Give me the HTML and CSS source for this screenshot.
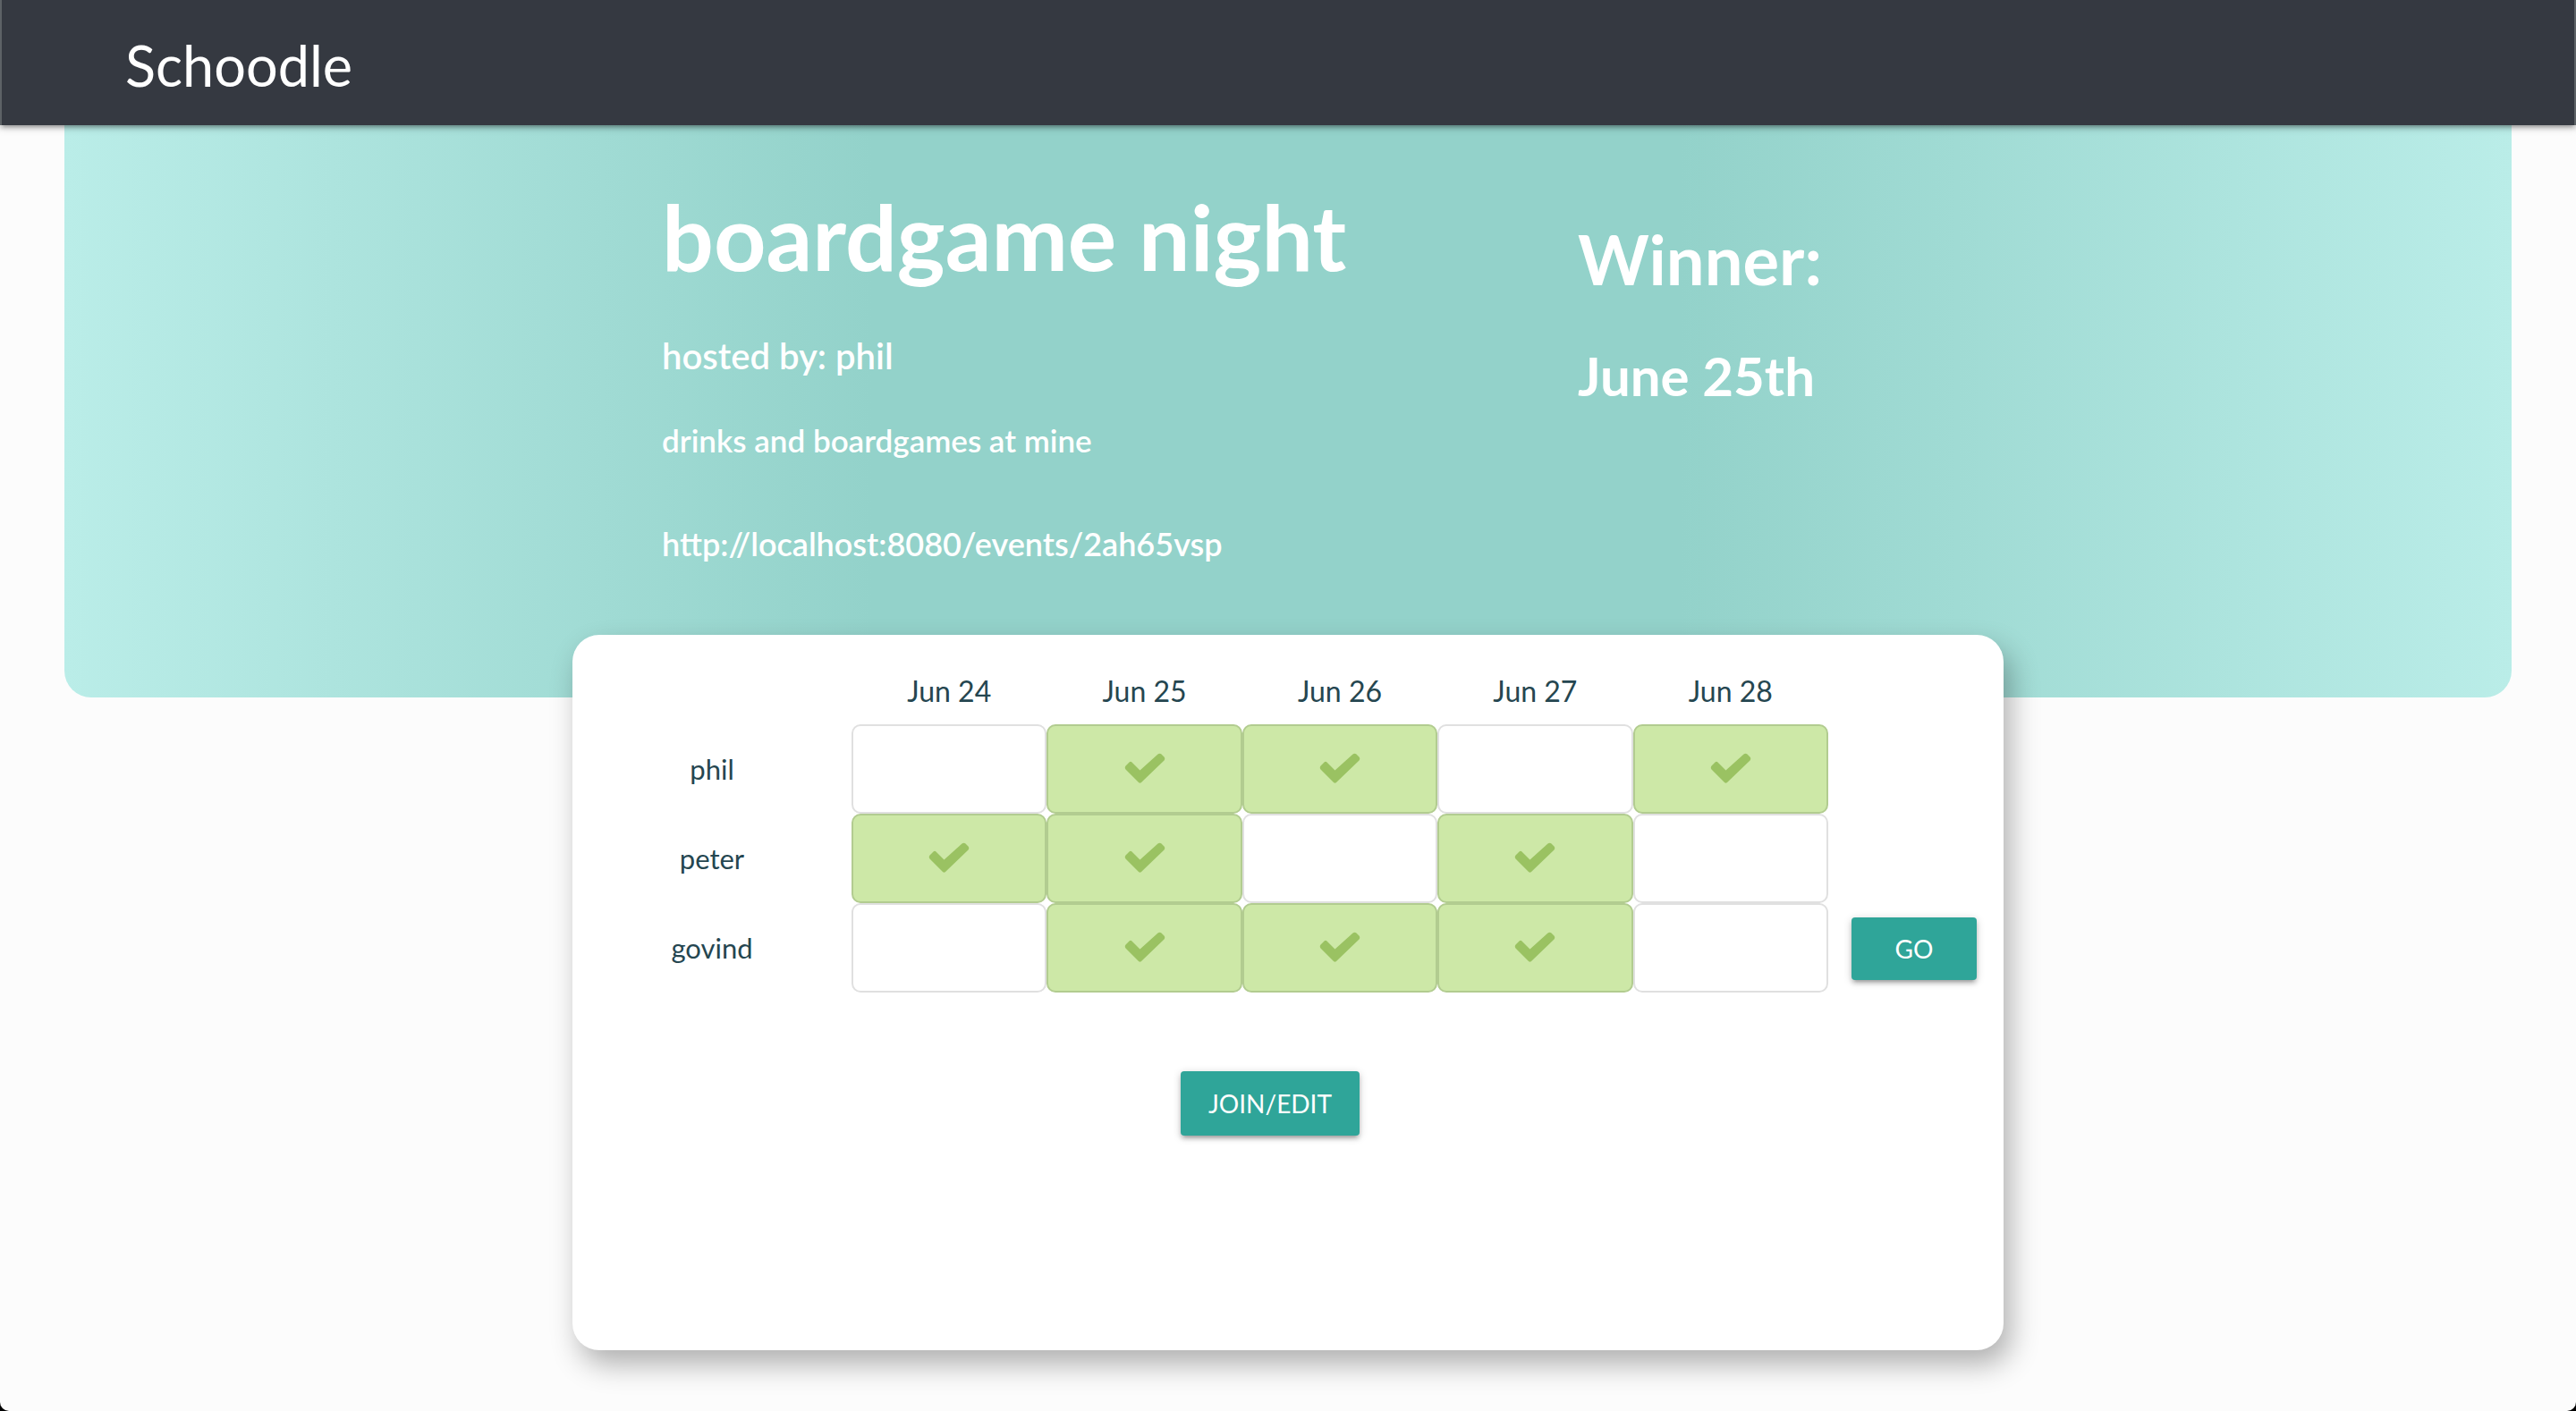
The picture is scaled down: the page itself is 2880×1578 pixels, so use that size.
FILE: index.html
```html
<!DOCTYPE html>
<html lang="en">
<head>
  <meta charset="utf-8">
  <meta name="viewport" content="width=device-width, initial-scale=1">
  <title>Schoodle</title>
  <link rel="stylesheet" href="styles.css">
</head>
<body>
  <svg class="sprite" aria-hidden="true">
    <symbol id="check" viewBox="0 0 46 34">
      <path d="M3 13 L5.500 10.500 Q7 9 8.500 10.500 L17.500 19.500 L37.500 1.500 Q39.500 0 41.500 1.500 L44.500 4.500 Q46 6.500 44.500 8.500 L19 33 Q17.500 34.500 16 33 L1.500 18.500 Q0 16.500 1.500 14.500 Z"/>
    </symbol>
  </svg>

  <header class="topbar">
    <a class="brand" href="#">Schoodle</a>
  </header>

  <main>
    <section class="banner">
      <div class="banner-inner">
        <div class="event">
          <h1 class="event-title">boardgame night</h1>
          <p class="event-host">hosted by: phil</p>
          <p class="event-detail">drinks and boardgames at mine</p>
          <a class="event-link" href="http://localhost:8080/events/2ah65vsp">http://localhost:8080/events/2ah65vsp</a>
        </div>
        <div class="winner">
          <h2 class="winner-title">Winner:</h2>
          <p class="winner-date">June 25th</p>
        </div>
      </div>
    </section>

    <section class="card">
      <table class="votes">
        <colgroup>
          <col class="col-name">
          <col><col><col><col><col>
          <col class="col-action">
        </colgroup>
        <thead>
          <tr>
            <td></td>
            <th scope="col">Jun 24</th>
            <th scope="col">Jun 25</th>
            <th scope="col">Jun 26</th>
            <th scope="col">Jun 27</th>
            <th scope="col">Jun 28</th>
            <td></td>
          </tr>
        </thead>
        <tbody>
          <tr>
            <th scope="row">phil</th>
            <td class="vote"></td>
            <td class="vote yes"><svg class="check"><use href="#check"/></svg></td>
            <td class="vote yes"><svg class="check"><use href="#check"/></svg></td>
            <td class="vote"></td>
            <td class="vote yes"><svg class="check"><use href="#check"/></svg></td>
            <td></td>
          </tr>
          <tr>
            <th scope="row">peter</th>
            <td class="vote yes"><svg class="check"><use href="#check"/></svg></td>
            <td class="vote yes"><svg class="check"><use href="#check"/></svg></td>
            <td class="vote"></td>
            <td class="vote yes"><svg class="check"><use href="#check"/></svg></td>
            <td class="vote"></td>
            <td></td>
          </tr>
          <tr>
            <th scope="row">govind</th>
            <td class="vote"></td>
            <td class="vote yes"><svg class="check"><use href="#check"/></svg></td>
            <td class="vote yes"><svg class="check"><use href="#check"/></svg></td>
            <td class="vote yes"><svg class="check"><use href="#check"/></svg></td>
            <td class="vote"></td>
            <td class="action"><button class="btn btn-go" type="button">GO</button></td>
          </tr>
        </tbody>
      </table>
      <div class="card-actions">
        <button class="btn btn-join" type="button">JOIN/EDIT</button>
      </div>
    </section>
  </main>
</body>
</html>
```
FILE: styles.css
```css
* {
  box-sizing: border-box;
}

html {
  background: #000;
}

body {
  display: flow-root;
  min-height: 100vh;
  margin: 0;
  border-radius: 0 0 10px 10px;
  background: #fcfcfc;
  font-family: Muli, Lato, sans-serif;
  color: #254650;
}

h1,
h2,
p {
  margin: 0;
}

.sprite {
  display: none;
}

/* Top bar */
.topbar {
  position: relative;
  display: flex;
  align-items: center;
  height: 140px;
  padding: 6px 138px 0;
  background: #353941;
  border-left: 2px solid #5d6266;
  border-right: 2px solid #5d6266;
  box-shadow: 0 4px 4px rgba(0, 0, 0, 0.14), 0 6px 2px -4px rgba(0, 0, 0, 0.12), 0 2px 10px rgba(0, 0, 0, 0.2);
}

.brand {
  color: #fff;
  font-size: 63px;
  line-height: 76px;
  text-decoration: none;
}

/* Event banner */
.banner {
  min-height: 640px;
  margin: 0 72px;
  padding: 62px 0;
  border-radius: 0 0 30px 30px;
  background: linear-gradient(to right, #baede8, #93d2ca 33%, #93d2ca 66%, #baede8);
  color: #fff;
  font-weight: 600;
}

.banner-inner {
  display: grid;
  grid-template-columns: 64% 1fr;
  max-width: 1600px;
  margin: 0 auto;
  padding-left: 100px;
}

.event {
  display: flex;
  flex-direction: column;
  align-items: flex-start;
}

.event-title {
  font-size: 102px;
  font-weight: 700;
  line-height: 124px;
}

.event-host {
  margin-top: 48px;
  font-size: 40px;
  line-height: 48px;
}

.event-detail {
  margin-top: 46px;
  font-size: 35px;
  line-height: 48px;
}

.event-link {
  margin-top: 68px;
  color: inherit;
  font-size: 36px;
  line-height: 48px;
  text-decoration: none;
}

.winner {
  padding: 42px 0 0 64px;
}

.winner-title {
  font-size: 76px;
  font-weight: 700;
  line-height: 92px;
}

.winner-date {
  margin-top: 48px;
  font-size: 60px;
  font-weight: 700;
  line-height: 72px;
}

/* Voting card */
.card {
  position: relative;
  max-width: 1600px;
  min-height: 800px;
  margin: -70px auto 68px;
  padding-top: 30px;
  border-radius: 30px;
  background: #fff;
  box-shadow: 8px 16px 32px rgba(0, 0, 0, 0.3);
}

.votes {
  width: 100%;
  table-layout: fixed;
  border-collapse: separate;
  border-spacing: 0;
}

.col-name {
  width: 312px;
}

.col-action {
  width: 196px;
}

.votes th,
.votes td {
  padding: 0;
  font-size: 31px;
  font-weight: 400;
  text-align: center;
  vertical-align: middle;
}

.votes thead th {
  height: 70px;
  padding-bottom: 6px;
  font-size: 32px;
}

.votes tbody tr {
  height: 100px;
}

.votes .vote {
  border: 2px solid #e0e0e0;
  border-radius: 10px;
}

.votes .vote.yes {
  padding-bottom: 2px;
  border-color: #b2cc90;
  background: #cde8a7;
}

.votes .action {
  padding: 2px 4px 0 0;
}

.check {
  display: block;
  width: 46px;
  height: 34px;
  margin: 0 auto;
  fill: #9ac262;
}

/* Buttons */
.btn {
  height: 72px;
  border: 0;
  border-radius: 4px;
  background: #2fa599;
  box-shadow: 0 4px 4px rgba(0, 0, 0, 0.14), 0 6px 2px -4px rgba(0, 0, 0, 0.12), 0 2px 10px rgba(0, 0, 0, 0.2);
  color: #fff;
  font-family: inherit;
  font-size: 28px;
  cursor: pointer;
}

.btn-go {
  width: 140px;
  height: 70px;
}

.btn-join {
  width: 200px;
}

.card-actions {
  display: flex;
  justify-content: center;
  margin-top: 88px;
  padding-right: 40px;
}
```
